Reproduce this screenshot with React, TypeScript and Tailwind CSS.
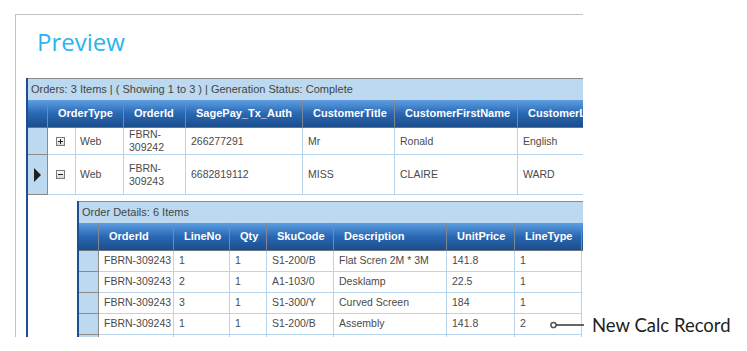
const orders = [
  { type: "Web", id: ["FBRN-", "309242"], auth: "266277291", title: "Mr", first: "Ronald", last: "English", open: false },
  { type: "Web", id: ["FBRN-", "309243"], auth: "6682819112", title: "MISS", first: "CLAIRE", last: "WARD", open: true },
];

const lines = [
  ["FBRN-309243", "1", "1", "S1-200/B", "Flat Scren 2M * 3M", "141.8", "1"],
  ["FBRN-309243", "2", "1", "A1-103/0", "Desklamp", "22.5", "1"],
  ["FBRN-309243", "3", "1", "S1-300/Y", "Curved Screen", "184", "1"],
  ["FBRN-309243", "1", "1", "S1-200/B", "Assembly", "141.8", "2"],
];

const outerHead = [
  { label: "OrderType", w: "w-[76px]" },
  { label: "OrderId", w: "w-[62px]" },
  { label: "SagePay_Tx_Auth", w: "w-[117px]" },
  { label: "CustomerTitle", w: "w-[92px]" },
  { label: "CustomerFirstName", w: "w-[123px]" },
  { label: "CustomerLastName", w: "w-[140px]" },
];

const detailHead = [
  { label: "OrderId", w: "w-[75px]" },
  { label: "LineNo", w: "w-[56px]" },
  { label: "Qty", w: "w-[37px]" },
  { label: "SkuCode", w: "w-[67px]" },
  { label: "Description", w: "w-[113px]" },
  { label: "UnitPrice", w: "w-[68px]" },
  { label: "LineType", w: "w-[67px]" },
];

const head = "box-border shrink-0 h-full flex items-center pl-[10px] border-r border-[#7e8894] font-bold text-white whitespace-nowrap overflow-hidden";
const cell = "box-border shrink-0 h-full flex items-center pl-[5px] border-r border-b border-[#b9d5ec] text-[10.5px] text-[#4a4a4a] overflow-hidden whitespace-nowrap";
const ind = "box-border shrink-0 w-[20px] h-full flex items-center justify-center bg-[#bcd9ef] border-r border-b border-[#8a8a8a]";

function ToggleBox({ open }: { open: boolean }) {
  return (
    <svg width="9" height="9" viewBox="0 0 9 9">
      <defs>
        <linearGradient id="tb" x1="0" y1="0" x2="0" y2="1">
          <stop offset="0" stopColor="#ffffff" />
          <stop offset="1" stopColor="#d6d6d6" />
        </linearGradient>
      </defs>
      <rect x="0.5" y="0.5" width="8" height="8" fill="url(#tb)" stroke="#7a7a7a" />
      <rect x="2" y="4" width="5" height="1" fill="#222" />
      {!open && <rect x="4" y="2" width="1" height="5" fill="#222" />}
    </svg>
  );
}

export default function App() {
  return (
    <div className="w-[747px] h-[351px] bg-white relative overflow-hidden" style={{ fontFamily: '"Liberation Sans", Arial, sans-serif' }}>
      <div className="ml-[15px] mt-[14px] w-[568px] h-[323px] border-t border-l border-[#c2c2c2] overflow-hidden">
        <div className="pl-[21px] mt-[11px] h-[32px] leading-[32px] text-[24px] text-[#2cb4ee]" style={{ fontFamily: '"Open Sans", sans-serif' }}>
          Preview
        </div>

        <div className="ml-[10px] mt-[20px] w-[720px] border-l-2 border-[#1b4f8e] text-[11px]">
          <div className="h-[22px] border-t border-[#8a8a8a] bg-[#bcd9ef] flex items-center pl-[3px] text-[#444]">
            Orders: 3 Items | ( Showing 1 to 3 ) | Generation Status: Complete
          </div>
          <div className="h-[28px] flex bg-gradient-to-b from-[#5d9fe2] via-[#2a68b3] to-[#1b4d8c] border-b border-[#6b7684]">
            <div className="box-border shrink-0 w-[20px] h-full border-r border-[#7e8894]" />
            {outerHead.map((h) => (
              <div key={h.label} className={`${head} ${h.w}`}>{h.label}</div>
            ))}
          </div>

          {orders.map((o) => (
            <div key={o.auth} className={`flex ${o.open ? "h-[40px]" : "h-[27px]"} leading-[13px]`}>
              <div className={ind}>
                {o.open && (
                  <svg width="7" height="14" viewBox="0 0 7 14">
                    <polygon points="0,0 7,7 0,14" fill="#1f1f1f" />
                  </svg>
                )}
              </div>
              <div className="box-border shrink-0 w-[28px] h-full flex items-center pl-[8px] border-r border-b border-[#b9d5ec]">
                <ToggleBox open={o.open} />
              </div>
              <div className={`${cell} w-[48px] !pl-[4px]`}>{o.type}</div>
              <div className={`${cell} w-[62px]`}>
                <div>{o.id[0]}<br />{o.id[1]}</div>
              </div>
              <div className={`${cell} w-[117px]`}>{o.auth}</div>
              <div className={`${cell} w-[92px]`}>{o.title}</div>
              <div className={`${cell} w-[123px]`}>{o.first}</div>
              <div className={`${cell} w-[140px]`}>{o.last}</div>
            </div>
          ))}

          <div className="bg-white pl-[49px] pt-[6px] pb-[10px]">
            <div className="w-[506px] border-l-2 border-[#1b4f8e]">
              <div className="h-[22px] border-t border-[#8a8a8a] bg-[#bcd9ef] flex items-center pl-[3px] text-[#444]">
                Order Details: 6 Items
              </div>
              <div className="h-[28px] flex bg-gradient-to-b from-[#5d9fe2] via-[#2a68b3] to-[#1b4d8c] border-b border-[#6b7684]">
                <div className="box-border shrink-0 w-[20px] h-full border-r border-[#7e8894]" />
                {detailHead.map((h) => (
                  <div key={h.label} className={`${head} ${h.w}`}>{h.label}</div>
                ))}
              </div>
              {lines.map((l, i) => (
                <div key={i} className="flex h-[21px]">
                  <div className={ind} />
                  {l.map((v, j) => (
                    <div key={j} className={`${cell} ${detailHead[j].w}`}>{v}</div>
                  ))}
                </div>
              ))}
              <div className="flex h-[21px]">
                <div className={ind} />
                {detailHead.map((h) => (
                  <div key={h.label} className={`${cell} ${h.w}`} />
                ))}
              </div>
            </div>
          </div>
        </div>
      </div>

      <div className="absolute left-[549px] top-[316px] flex items-center h-[18px]">
        <svg width="36" height="10" viewBox="0 0 36 10">
          <circle cx="4.5" cy="5" r="2.6" fill="#fff" stroke="#555" strokeWidth="1.5" />
          <line x1="7" y1="5" x2="35" y2="5" stroke="#333" strokeWidth="1.5" />
        </svg>
        <span className="ml-[7px] text-[18.5px] leading-[18px] text-[#1e1e1e]" style={{ fontFamily: "Lato, sans-serif" }}>
          New Calc Record
        </span>
      </div>
    </div>
  );
}
